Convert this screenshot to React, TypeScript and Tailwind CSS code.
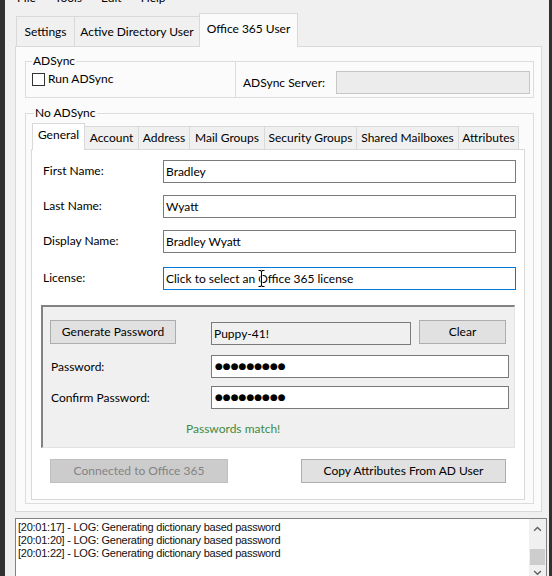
import React from "react";

const innerTabs: { label: string; w: string }[] = [
  { label: "Account", w: "w-[55px]" },
  { label: "Address", w: "w-[52px]" },
  { label: "Mail Groups", w: "w-[76px]" },
  { label: "Security Groups", w: "w-[93px]" },
  { label: "Shared Mailboxes", w: "w-[103px]" },
  { label: "Attributes", w: "w-[61px]" },
];

const fields = [
  { label: "First Name:", value: "Bradley", mt: "mt-[10px]" },
  { label: "Last Name:", value: "Wyatt", mt: "mt-[12px]" },
  { label: "Display Name:", value: "Bradley Wyatt", mt: "mt-[12px]" },
];

const logLines = [
  "[20:01:17] - LOG: Generating dictionary based password",
  "[20:01:20] - LOG: Generating dictionary based password",
  "[20:01:22] - LOG: Generating dictionary based password",
];

function TextBox({ value, className = "" }: { value?: string; className?: string }) {
  return (
    <div className={`flex h-[23px] items-center border border-[#7a7a7a] pl-[2px] ${className}`}>
      {value}
    </div>
  );
}

function Dots() {
  return (
    <span className="font-['DejaVu_Sans',sans-serif] text-[9px] leading-none text-black">
      ●●●●●●●●●
    </span>
  );
}

export default function App() {
  return (
    <div className="flex h-[576px] w-[552px] overflow-hidden bg-[#f0f0f0] font-['Lato','Noto_Sans',sans-serif] text-[12px] leading-[16px] text-black">
      <div className="w-[5px] shrink-0 bg-[#2f3133]" />

      <div className="flex w-[544px] shrink-0 flex-col">
        {/* menu bar, cut off at the top */}
        <div className="h-[6px] shrink-0 overflow-hidden">
          <div className="-mt-[10px] flex gap-[19px] pl-[12px]">
            <span>File</span>
            <span>Tools</span>
            <span>Edit</span>
            <span>Help</span>
          </div>
        </div>

        {/* main tabs */}
        <div className="ml-[10px] mt-[7px] flex h-[33px] shrink-0 items-end pl-[1px]">
          <div className="flex h-[30px] w-[59px] items-center justify-center border border-b-0 border-[#d9d9d9] bg-[#f0f0f0]">
            Settings
          </div>
          <div className="-ml-px flex h-[30px] w-[126px] items-center justify-center border border-b-0 border-[#d9d9d9] bg-[#f0f0f0]">
            Active Directory User
          </div>
          <div className="relative z-10 -mb-px -ml-px flex h-[34px] w-[99px] items-start justify-center border border-b-0 border-[#d9d9d9] bg-[#fbfbfb] pt-[7px]">
            Office 365 User
          </div>
        </div>

        <div className="ml-[10px] h-[466px] w-[527px] shrink-0 border border-[#d9d9d9] bg-[#fbfbfb] pl-[9px] pt-[6px]">
          {/* ADSync group */}
          <fieldset className="m-0 w-[509px] border border-[#dcdcdc] p-0">
            <legend className="ml-[6px] px-[1px] leading-[16px]">ADSync</legend>
            <div className="flex h-[28px]">
              <div className="flex w-[209px] items-start gap-[3px] pl-[6px] pt-[4px]">
                <span className="h-[13px] w-[13px] border border-[#333] bg-white" />
                <span className="-mt-[2px]">Run ADSync</span>
              </div>
              <div className="-mt-[8px] flex h-[36px] flex-1 items-center border-l border-[#dcdcdc] pb-[3px] pl-[7px] pr-[3px] pt-[10px]">
                <span className="pt-[1px]">ADSync Server:</span>
                <div className="ml-auto h-[23px] w-[194px] border border-[#c6c6c6] bg-[#ececec]" />
              </div>
            </div>
          </fieldset>

          {/* No ADSync group */}
          <fieldset className="m-0 mt-[7px] w-[509px] border border-[#dcdcdc] p-0">
            <legend className="ml-[8px] px-[1px] leading-[16px]">No ADSync</legend>
            <div className="h-[382px] pl-[5px] pt-[2px]">
              <div className="flex h-[26px] items-end pl-[1px]">
                <div className="relative z-10 -mb-px flex h-[27px] w-[53px] items-start justify-center border border-b-0 border-[#d9d9d9] bg-white pt-[3px]">
                  General
                </div>
                {innerTabs.map((t) => (
                  <div
                    key={t.label}
                    className={`-ml-px flex h-[23px] items-center justify-center border border-b-0 border-[#d9d9d9] bg-[#f0f0f0] ${t.w}`}
                  >
                    {t.label}
                  </div>
                ))}
              </div>

              <div className="h-[351px] w-[494px] border border-[#d9d9d9] bg-white">
                {fields.map((f) => (
                  <div key={f.label} className={`flex h-[23px] items-center ${f.mt}`}>
                    <span className="w-[131px] pb-[2px] pl-[11px]">{f.label}</span>
                    <TextBox value={f.value} className="w-[353px] bg-white" />
                  </div>
                ))}
                <div className="mt-[14px] flex h-[23px] items-center">
                  <span className="w-[131px] pb-[2px] pl-[11px]">License:</span>
                  <div className="relative flex h-[23px] w-[353px] items-center border border-[#0078d7] bg-white pl-[2px]">
                    Click to select an Office 365 license
                    <svg
                      className="absolute left-[94px] top-[2px]"
                      width="7"
                      height="17"
                      viewBox="0 0 7 17"
                    >
                      <path
                        d="M0.5 0.5h2.5v1h1v-1h2.5M3.5 1.5v14M0.5 16.5h2.5v-1h1v1h2.5"
                        fill="none"
                        stroke="#ffffff"
                        strokeWidth="2.2"
                      />
                      <path
                        d="M0.5 0.5h2.5v1h1v-1h2.5M3.5 1.5v14M0.5 16.5h2.5v-1h1v1h2.5"
                        fill="none"
                        stroke="#000000"
                        strokeWidth="1"
                      />
                    </svg>
                  </div>
                </div>

                {/* password panel */}
                <div className="ml-[9px] mt-[15px] h-[143px] w-[474px] border-b border-l-2 border-r border-t-2 border-b-[#e3e3e3] border-l-[#828282] border-r-[#e3e3e3] border-t-[#828282] bg-[#f0f0f0] pt-[13px]">
                  <div className="flex h-[24px] items-start">
                    <div className="ml-[7px] flex h-[24px] w-[126px] items-center justify-center border border-[#adadad] bg-[#e1e1e1]">
                      Generate Password
                    </div>
                    <TextBox value="Puppy-41!" className="ml-[35px] mt-[2px] w-[200px] bg-[#f0f0f0]" />
                    <div className="ml-[8px] flex h-[24px] w-[87px] items-center justify-center border border-[#adadad] bg-[#e1e1e1]">
                      Clear
                    </div>
                  </div>
                  <div className="mt-[11px] flex h-[23px] items-center">
                    <span className="w-[168px] pl-[8px]">Password:</span>
                    <div className="flex h-[23px] w-[298px] items-center border border-[#7a7a7a] bg-white pl-[3px]">
                      <Dots />
                    </div>
                  </div>
                  <div className="mt-[8px] flex h-[23px] items-center">
                    <span className="w-[168px] pl-[8px]">Confirm Password:</span>
                    <div className="flex h-[23px] w-[298px] items-center border border-[#7a7a7a] bg-white pl-[3px]">
                      <Dots />
                    </div>
                  </div>
                  <div className="mt-[12px] pl-[143px] text-[#3f8a3f]">Passwords match!</div>
                </div>

                <div className="mt-[11px] flex h-[24px]">
                  <div className="ml-[18px] flex h-[24px] w-[178px] items-center justify-center border border-[#bfbfbf] bg-[#cccccc] text-[#838383]">
                    Connected to Office 365
                  </div>
                  <div className="ml-[73px] flex h-[24px] w-[205px] items-center justify-center border border-[#adadad] bg-[#e1e1e1]">
                    Copy Attributes From AD User
                  </div>
                </div>
              </div>
            </div>
          </fieldset>
        </div>

        {/* log box */}
        <div className="ml-[10px] mt-[6px] flex h-[58px] w-[532px] shrink-0 border border-b-0 border-[#828282] bg-white">
          <div className="flex-1 pl-[2px] pt-[2px] font-['Liberation_Sans',sans-serif] text-[11px] leading-[13px] tracking-[-0.25px] text-[#111]">
            {logLines.map((l) => (
              <div key={l}>{l}</div>
            ))}
          </div>
          <div className="flex w-[17px] flex-col items-center bg-[#f0f0f0]">
            <svg className="mt-[7px]" width="9" height="6" viewBox="0 0 9 6">
              <path d="M1 5l3.5-3.5L8 5" fill="none" stroke="#606060" strokeWidth="1.4" />
            </svg>
            <div className="mt-[17px] h-[17px] w-[15px] bg-[#cdcdcd]" />
            <svg className="mt-[5px]" width="9" height="6" viewBox="0 0 9 6">
              <path d="M1 1l3.5 3.5L8 1" fill="none" stroke="#606060" strokeWidth="1.4" />
            </svg>
          </div>
        </div>
      </div>

      <div className="flex-1 bg-[#2f3133]" />
    </div>
  );
}
